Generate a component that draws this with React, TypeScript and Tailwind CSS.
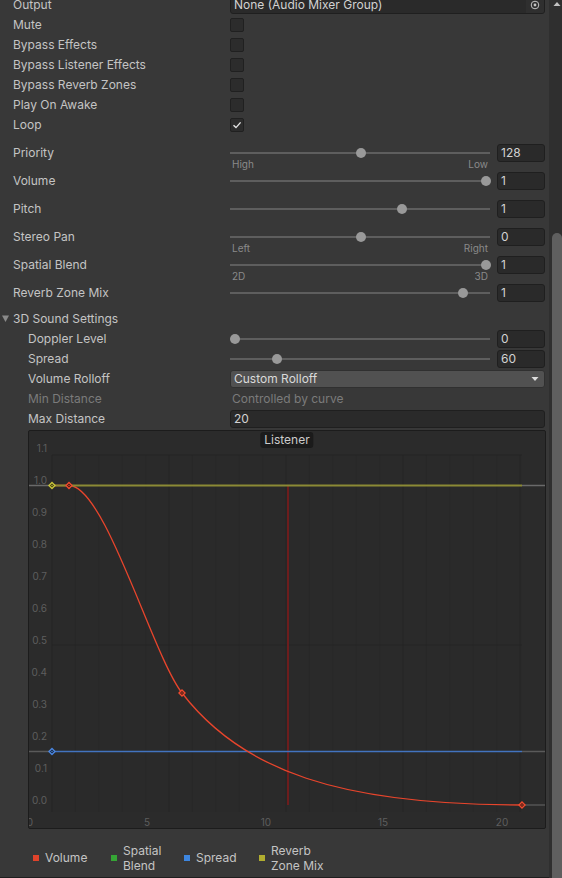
import React from 'react';

// Unity-style Audio Source inspector (dark skin)

function Label({ text, indent, dim }: { text: string; indent?: boolean; dim?: boolean }) {
  return (
    <div
      className={`w-[230px] shrink-0 leading-[14px] ${indent ? 'pl-[28px]' : 'pl-[13px]'} ${
        dim ? 'text-[#7b7b7b]' : 'text-[#c4c4c4]'
      }`}
    >
      {text}
    </div>
  );
}

function CheckRow({ label, checked }: { label: string; checked?: boolean }) {
  return (
    <div className="flex items-center h-[20px]">
      <Label text={label} />
      <div className="w-[14px] h-[14px] rounded-[2px] bg-[#2c2c2c] border border-[#202020] flex items-center justify-center">
        {checked && (
          <svg width="10" height="10" viewBox="0 0 10 10">
            <polyline points="1.5,5.2 4,7.6 8.6,2.4" fill="none" stroke="#e6e6e6" strokeWidth="1.4" />
          </svg>
        )}
      </div>
    </div>
  );
}

function Track({ pos }: { pos: number }) {
  return (
    <div className="relative w-[260px] h-[18px] shrink-0">
      <div className="absolute left-0 right-0 top-[8px] h-[2px] bg-[#5e5e5e]" />
      <div
        className="absolute top-[4px] w-[10px] h-[10px] rounded-full bg-[#999999]"
        style={{ left: pos * 251 }}
      />
    </div>
  );
}

function NumField({ value }: { value: string }) {
  return (
    <div className="ml-[7px] w-[48px] h-[18px] rounded-[3px] bg-[#2a2a2a] border border-[#1f1f1f] text-[#d2d2d2] pl-[3px] leading-[16px]">
      {value}
    </div>
  );
}

function SliderRow({
  label,
  pos,
  value,
  sub,
  short,
}: {
  label: string;
  pos: number;
  value: string;
  sub?: [string, string];
  short?: boolean;
}) {
  return (
    <div className={short ? 'h-[25px]' : 'h-[28px]'}>
      <div className="flex items-center h-[18px]">
        <Label text={label} />
        <Track pos={pos} />
        <NumField value={value} />
      </div>
      {sub && (
        <div className="flex justify-between -mt-[3px] ml-[232px] w-[256px] text-[10px] leading-[10px] text-[#8a8a8a]">
          <span>{sub[0]}</span>
          <span>{sub[1]}</span>
        </div>
      )}
    </div>
  );
}

function SmallSliderRow({ label, pos, value }: { label: string; pos: number; value: string }) {
  return (
    <div className="flex items-center h-[20px]">
      <Label text={label} indent />
      <Track pos={pos} />
      <NumField value={value} />
    </div>
  );
}

const yOf = (v: number) => 805 - v * 319.5;

function Key({ x, y, color, fill }: { x: number; y: number; color: string; fill: string }) {
  return (
    <g>
      <polygon
        points={`${x},${y - 3} ${x + 3},${y} ${x},${y + 3} ${x - 3},${y}`}
        fill={fill}
        stroke={color}
        strokeWidth="1.4"
      />
      <rect x={x - 0.6} y={y - 0.6} width="1.2" height="1.2" fill={color} />
    </g>
  );
}

function CurveChart() {
  const minor = Array.from({ length: 21 }, (_, k) => 52 + k * 23.4);
  const yTicks = [1.1, 1.0, 0.9, 0.8, 0.7, 0.6, 0.5, 0.4, 0.3, 0.2, 0.1, 0.0];
  const xTicks: [string, number][] = [
    ['0', 30],
    ['5', 147],
    ['10', 266],
    ['15', 383],
    ['20', 502],
  ];
  return (
    <svg width="516" height="397" viewBox="29 431 516 397" className="block" fontFamily="Inter, sans-serif">
      <rect x="52" y="455" width="470" height="357" fill="#2a2a2a" />
      {minor.map((x, k) => (
        <line
          key={k}
          x1={x}
          x2={x}
          y1="455"
          y2="812"
          stroke={k % 5 === 0 ? '#242424' : '#282828'}
          strokeWidth="1"
        />
      ))}
      <line x1="52" x2="522" y1="455" y2="455" stroke="#242424" />
      <line x1="52" x2="522" y1="645" y2="645" stroke="#242424" />

      {yTicks.map((v) => (
        <text key={v} x="47" y={yOf(v) - 4} fontSize="10" fill="#5e5e5e" textAnchor="end" dominantBaseline="middle">
          {v.toFixed(1)}
        </text>
      ))}
      {xTicks.map(([t, x]) => (
        <text key={t} x={x} y="823" fontSize="10" fill="#5e5e5e" textAnchor="middle" dominantBaseline="middle">
          {t}
        </text>
      ))}

      {/* listener position */}
      <line x1="288" x2="288" y1="485" y2="805" stroke="#6c1d1d" strokeWidth="2" />

      {/* outside-range extensions */}
      <line x1="28" x2="52" y1="485.5" y2="485.5" stroke="#6a6a6a" strokeWidth="1.5" />
      <line x1="522" x2="546" y1="485.5" y2="485.5" stroke="#6a6a6a" strokeWidth="1.5" />
      <line x1="28" x2="52" y1="751.5" y2="751.5" stroke="#5a5a5a" strokeWidth="1.5" />
      <line x1="522" x2="546" y1="751.5" y2="751.5" stroke="#5a5a5a" strokeWidth="1.5" />
      <line x1="522" x2="546" y1="805" y2="805" stroke="#555555" strokeWidth="1.5" />

      <line x1="52" x2="522" y1="751.5" y2="751.5" stroke="#4273bf" strokeWidth="1.6" />
      <path
        d="M52 485.5 L69 485.5 C105 485.5 152 654 182 693 C242 771 340 805 522 805"
        fill="none"
        stroke="#e8452c"
        strokeWidth="1.3"
      />
      <line x1="52" x2="522" y1="485.5" y2="485.5" stroke="#8b8a35" strokeWidth="2" />

      <Key x={52} y={485.5} color="#c8c43a" fill="#3a3814" />
      <Key x={69} y={485.5} color="#f04a2e" fill="#3a1a14" />
      <Key x={182} y={693} color="#f04a2e" fill="#3a1a14" />
      <Key x={522} y={805} color="#f04a2e" fill="#3a1a14" />
      <Key x={52} y={751.5} color="#4a86e0" fill="#16243a" />
    </svg>
  );
}

function LegendItem({ color, lines, w }: { color: string; lines: string[]; w: string }) {
  return (
    <div className={`flex items-center ${w}`}>
      <div className={`w-[6px] h-[6px] ${color}`} />
      <div className="ml-[6px] text-[#c4c4c4] leading-[15px]">
        {lines.map((l) => (
          <div key={l}>{l}</div>
        ))}
      </div>
    </div>
  );
}

export default function App() {
  return (
    <div className="w-[562px] h-[878px] overflow-hidden bg-[#383838] flex font-['Inter','Noto_Sans',sans-serif] text-[12px]">
      <div className="w-[549px] shrink-0 -mt-[5px]">
        {/* Output */}
        <div className="flex items-center h-[20px]">
          <Label text="Output" />
          <div className="w-[315px] h-[18px] rounded-[3px] bg-[#2a2a2a] border border-[#1f1f1f] flex items-center overflow-hidden">
            <div className="flex-1 pl-[3px] text-[#d2d2d2] leading-[16px]">None (Audio Mixer Group)</div>
            <div className="w-[18px] h-full bg-[#2f2f2f] flex items-center justify-center">
              <svg width="10" height="10" viewBox="0 0 10 10">
                <circle cx="5" cy="5" r="3.8" fill="none" stroke="#c4c4c4" strokeWidth="1" />
                <circle cx="5" cy="5" r="1.4" fill="#c4c4c4" />
              </svg>
            </div>
          </div>
        </div>
        <CheckRow label="Mute" />
        <CheckRow label="Bypass Effects" />
        <CheckRow label="Bypass Listener Effects" />
        <CheckRow label="Bypass Reverb Zones" />
        <CheckRow label="Play On Awake" />
        <CheckRow label="Loop" checked />

        <div className="mt-[9px]">
          <SliderRow label="Priority" pos={0.5} value="128" sub={['High', 'Low']} />
          <SliderRow label="Volume" pos={1} value="1" />
          <SliderRow label="Pitch" pos={0.6667} value="1" />
          <SliderRow label="Stereo Pan" pos={0.5} value="0" sub={['Left', 'Right']} />
          <SliderRow label="Spatial Blend" pos={1} value="1" sub={['2D', '3D']} />
          <SliderRow label="Reverb Zone Mix" pos={0.909} value="1" short />
        </div>

        {/* 3D Sound Settings foldout */}
        <div className="flex items-center h-[20px]">
          <svg width="13" height="10" viewBox="0 0 13 10" className="shrink-0">
            <polygon points="2,1.5 9,1.5 5.5,8" fill="#8a8a8a" />
          </svg>
          <span className="text-[#c4c4c4] leading-[14px]">3D Sound Settings</span>
        </div>
        <SmallSliderRow label="Doppler Level" pos={0} value="0" />
        <SmallSliderRow label="Spread" pos={0.1667} value="60" />
        <div className="flex items-center h-[20px]">
          <Label text="Volume Rolloff" indent />
          <div className="w-[315px] h-[18px] rounded-[3px] bg-[#515151] border border-[#303030] flex items-center justify-between pl-[3px] pr-[5px]">
            <span className="text-[#dadada] leading-[16px]">Custom Rolloff</span>
            <svg width="8" height="6" viewBox="0 0 8 6">
              <polygon points="0.5,1 7.5,1 4,5" fill="#dcdcdc" />
            </svg>
          </div>
        </div>
        <div className="flex items-center h-[20px]">
          <Label text="Min Distance" indent dim />
          <span className="pl-[2px] text-[#7b7b7b] leading-[14px]">Controlled by curve</span>
        </div>
        <div className="flex items-center h-[20px]">
          <Label text="Max Distance" indent />
          <div className="w-[315px] h-[18px] rounded-[3px] bg-[#2a2a2a] border border-[#1f1f1f] pl-[3px] text-[#d2d2d2] leading-[16px]">
            20
          </div>
        </div>

        {/* Rolloff curve */}
        <div className="mt-[1px] ml-[28px] w-[518px] h-[399px] relative bg-[#2b2b2b] border border-[#1c1c1c] rounded-[2px] overflow-hidden">
          <CurveChart />
          <div className="absolute top-[1px] left-1/2 -translate-x-1/2 h-[16px] px-[4px] rounded-[3px] bg-[#1b1b1b] text-[#cccccc] leading-[16px]">
            Listener
          </div>
        </div>

        {/* Legend */}
        <div className="h-[49px] pt-[9px] pl-[33px] flex items-center border-b border-[#1e1e1e]">
          <LegendItem color="bg-[#e0432b]" lines={['Volume']} w="w-[78px]" />
          <LegendItem color="bg-[#35a535]" lines={['Spatial', 'Blend']} w="w-[73px]" />
          <LegendItem color="bg-[#3d86e0]" lines={['Spread']} w="w-[75px]" />
          <LegendItem color="bg-[#b0ad30]" lines={['Reverb', 'Zone Mix']} w="w-[90px]" />
        </div>
      </div>

      {/* scrollbar */}
      <div className="w-[13px] shrink-0 h-full relative bg-[#2f2f2f]">
        <svg width="8" height="6" viewBox="0 0 8 6" className="absolute left-[4px] top-[1px]">
          <polygon points="4,1 7.5,5 0.5,5" fill="#c2c2c2" />
        </svg>
        <div className="absolute left-[3px] top-[233px] bottom-0 w-[10px] rounded-t-full bg-[#5f5f5f]" />
      </div>
    </div>
  );
}
